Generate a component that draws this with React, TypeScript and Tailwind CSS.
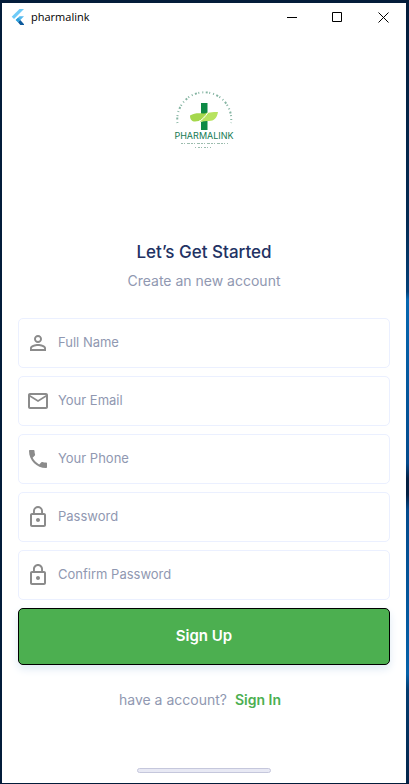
import type { IconType } from "react-icons";
import {
  MdLockOutline,
  MdMailOutline,
  MdPersonOutline,
  MdPhone,
} from "react-icons/md";

type Field = { id: string; label: string; type: string; Icon: IconType };

const fields: Field[] = [
  { id: "name", label: "Full Name", type: "text", Icon: MdPersonOutline },
  { id: "email", label: "Your Email", type: "email", Icon: MdMailOutline },
  { id: "phone", label: "Your Phone", type: "tel", Icon: MdPhone },
  { id: "password", label: "Password", type: "password", Icon: MdLockOutline },
  { id: "confirm", label: "Confirm Password", type: "password", Icon: MdLockOutline },
];

function FlutterMark() {
  return (
    <svg viewBox="0 0 14 16" className="h-4 w-3.5" aria-hidden="true">
      <path d="M8.5 0H13L3 10 .7 7.8z" fill="#6fcbf8" />
      <path d="M8.5 7.3H13L9.3 11 7 13.3 4.7 11z" fill="#54b9ee" />
      <path d="M7 13.3 9.3 11 13 15.2V16H9.3z" fill="#0d5a9c" />
      <path d="M4.7 11 7 8.8 9.3 11 7 13.3z" fill="#2d9fdb" />
    </svg>
  );
}

function TitleBar() {
  return (
    <header className="flex h-7 items-center justify-between pr-px pl-[9px]">
      <div className="flex items-center gap-1.5">
        <FlutterMark />
        <span className="font-['Open_Sans',sans-serif] text-[11px] leading-4 text-black">pharmalink</span>
      </div>
      <div className="flex">
        <button type="button" aria-label="Minimize" className="flex h-7 w-11 items-center justify-center">
          <svg viewBox="0 0 11 11" className="size-[11px]" stroke="#000" fill="none">
            <path d="M1 5.5h10" />
          </svg>
        </button>
        <button type="button" aria-label="Maximize" className="flex h-7 w-12 items-center justify-center">
          <svg viewBox="0 0 11 11" className="size-[11px]" stroke="#000" fill="none">
            <path d="M.5.5h9v9h-9z" />
          </svg>
        </button>
        <button type="button" aria-label="Close" className="flex h-7 w-11 items-center justify-center">
          <svg viewBox="0 0 11 11" className="size-[11px]" stroke="#000" fill="none">
            <path d="m.5.5 10 10m0-10-10 10" />
          </svg>
        </button>
      </div>
    </header>
  );
}

function Logo() {
  return (
    <svg viewBox="0 0 60 60" className="size-15" role="img" aria-label="Pharmalink">
      <path
        d="M3.5 33A27 27 0 1 1 57 33"
        fill="none"
        stroke="#86b5a3"
        strokeWidth="2"
        strokeDasharray="1 2.5 2 1.5 1 3"
      />
      <path d="M27 13h6.500v10L27 27z" fill="#0e8a45" />
      <path d="M33.500 29v11H27v-8z" fill="#0e8a45" />
      <path d="M16 25.500c4-2.500 9-2.500 13-2 2 0 3-.5 5-1-3 6-8 9-13 9-3 0-5-2-5-6z" fill="#a5d84c" />
      <path d="M26 32c3-6 6-9.500 10-9.500 3-.5 5-.5 8-.5-1 6-4 9-9 9-3 0-6 0-9 1z" fill="#b7e35f" />
      <path d="M24 32c4-2 7-5 10-9.500" fill="none" stroke="#fff" />
      <text x="30" y="49" textAnchor="middle" fontFamily="Inter, sans-serif" fontSize="9" fill="#157a53">
        PHARMALINK
      </text>
      <path d="M7 53.500h47" stroke="#9cbcae" strokeDasharray="2 1 1 2 3 1" />
      <path d="M21 57.500h16" stroke="#9cbcae" strokeDasharray="1 2 2 1" />
    </svg>
  );
}

export default function App() {
  return (
    <div className="flex min-h-screen bg-[#031c3a] pt-[3px] pb-px pl-0.5 font-[Inter,sans-serif]">
      <div className="flex min-w-0 flex-1 flex-col bg-white">
        <TitleBar />
        <main className="flex flex-1 flex-col px-4">
          <div className="flex justify-center pt-[59px]">
            <Logo />
          </div>
          <h1 className="mt-[90px] text-center text-[17px] leading-6 font-medium text-[#223263]">
            Let’s Get Started
          </h1>
          <p className="mt-[7px] text-center text-sm leading-5 text-[#9098b1]">Create an new account</p>
          <form className="mt-[27px] flex flex-col gap-2" onSubmit={(e) => e.preventDefault()}>
            {fields.map(({ id, label, type, Icon }) => (
              <div key={id} className="flex h-[50px] items-center rounded-[5px] border border-[#ebf0ff]">
                <label htmlFor={id} aria-label={label} className="pr-2 pl-[7px]">
                  <Icon className="size-6 text-[#8b8b8b]" />
                </label>
                <input
                  id={id}
                  type={type}
                  placeholder={label}
                  className="h-full min-w-0 flex-1 pb-0.5 text-[13px] text-[#223263] outline-none placeholder:text-[#9098b1]"
                />
              </div>
            ))}
            <button
              type="submit"
              className="h-[57px] rounded-[5px] border border-black bg-[#4caf50] text-[15px] font-semibold text-white shadow-[0_4px_8px_#dfeaf5]"
            >
              Sign Up
            </button>
          </form>
          <p className="mt-[25px] flex justify-center gap-2 pr-2 text-sm leading-5 text-[#9098b1]">
            have a account?
            <a href="#signin" className="font-semibold text-[#4caf50]">Sign In</a>
          </p>
        </main>
        <div className="mx-auto mb-[10px] h-[5px] w-1/3 rounded-full border border-[#c5c7dc] bg-[#e8e9f4]" />
      </div>
      <div className="w-[3px] bg-[linear-gradient(#031c3a_0%,#032a52_28%,#034078_37%,#0667b0_38%,#034a8c_59%,#031f42_61%,#031f42_63%,#034a8c_65%,#0561a8_86%,#033c70_88%,#032448_100%)]" />
    </div>
  );
}
